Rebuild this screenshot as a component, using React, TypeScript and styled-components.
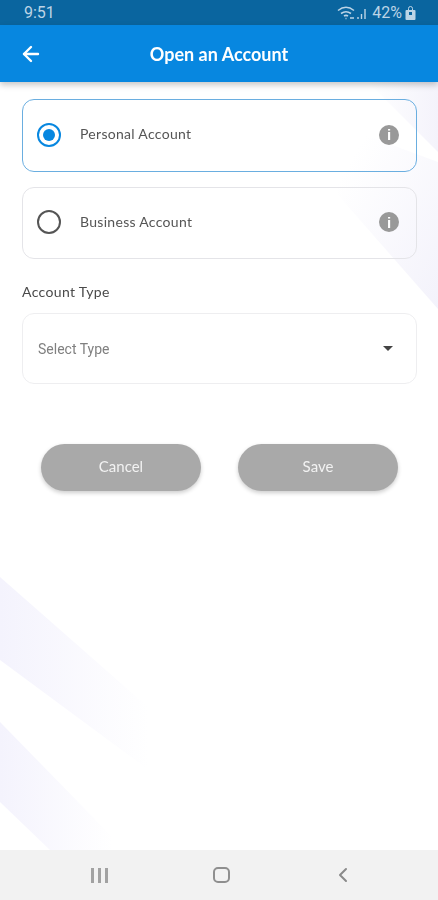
import React from 'react';
import styled, { createGlobalStyle } from 'styled-components';
import { ArrowLeft, ChevronLeft } from 'lucide-react';

const GlobalStyle = createGlobalStyle`
  html, body {
    margin: 0;
    padding: 0;
    background: #fff;
    font-family: Lato, "Liberation Sans", sans-serif;
  }
  * {
    box-sizing: border-box;
  }
`;

// the whole capture is soft, so the screen gets a slight blur
const Screen = styled.div`
  display: flex;
  flex-direction: column;
  width: 438px;
  height: 900px;
  overflow: hidden;
  filter: blur(0.45px);
`;

const StatusBar = styled.div`
  display: flex;
  align-items: center;
  justify-content: space-between;
  height: 25px;
  padding: 0 22px 0 24px;
  background: #0a659f;
  color: #bcd4e6;
  font-family: Roboto, sans-serif;
  font-size: 16px;
`;

const StatusRight = styled.div`
  display: flex;
  align-items: center;
  gap: 3px;
`;

const Header = styled.header`
  position: relative;
  z-index: 2;
  display: flex;
  align-items: center;
  justify-content: center;
  height: 57px;
  background: #0787e0;
  box-shadow: 0 3px 6px rgba(0, 0, 0, 0.22);
`;

const BackButton = styled.button`
  position: absolute;
  left: 19px;
  top: 17px;
  display: flex;
  padding: 0;
  border: 0;
  background: none;
  color: #fff;
`;

const Title = styled.h1`
  margin: 0;
  color: #fff;
  font-size: 18px;
  font-weight: 700;
`;

const Main = styled.main`
  position: relative;
  flex: 1;
  display: flex;
  flex-direction: column;
  padding: 17px 21px 0 22px;
`;

const Backdrop = styled.svg`
  position: absolute;
  left: 0;
  top: 0;
`;

const OptionCard = styled.div<{ $selected?: boolean }>`
  position: relative;
  display: flex;
  align-items: center;
  height: ${(p) => (p.$selected ? 73 : 72)}px;
  margin-bottom: ${(p) => (p.$selected ? 15 : 0)}px;
  padding: 0 15px 2px 14px;
  border: 1px solid ${(p) => (p.$selected ? '#6aaee0' : '#e4e4e8')};
  border-radius: 12px;
`;

const Radio = styled.span<{ $selected?: boolean }>`
  display: flex;
  align-items: center;
  justify-content: center;
  flex: none;
  width: 24px;
  height: 24px;
  border: 2px solid ${(p) => (p.$selected ? '#0787e0' : '#555')};
  border-radius: 50%;
  &::after {
    content: '';
    display: ${(p) => (p.$selected ? 'block' : 'none')};
    width: 12px;
    height: 12px;
    border-radius: 50%;
    background: #0787e0;
  }
`;

const OptionLabel = styled.span`
  flex: 1;
  margin-left: 19px;
  padding-bottom: 2px;
  color: #555;
  font-size: 14px;
  letter-spacing: 0.3px;
`;

const InfoIcon = styled.span`
  display: flex;
  align-items: center;
  justify-content: center;
  flex: none;
  width: 20px;
  height: 20px;
  margin-right: 2px;
  border-radius: 50%;
  background: #999;
  color: #fff;
  font-family: "Liberation Sans", sans-serif;
  font-size: 15px;
  font-weight: 700;
`;

const FieldLabel = styled.label`
  position: relative;
  margin-top: 24px;
  color: #4a4a4a;
  font-size: 14px;
  line-height: 17px;
  letter-spacing: 0.35px;
`;

const SelectBox = styled.div`
  position: relative;
  display: flex;
  align-items: center;
  justify-content: space-between;
  height: 71px;
  margin-top: 13px;
  padding: 0 23px 0 15px;
  background: #fff;
  border: 1px solid #eeeef0;
  border-radius: 12px;
  color: #808080;
  font-family: Roboto, sans-serif;
  font-size: 14px;
`;

const Caret = styled.span`
  width: 0;
  height: 0;
  border-left: 5px solid transparent;
  border-right: 5px solid transparent;
  border-top: 5px solid #444;
`;

const Actions = styled.div`
  position: relative;
  display: flex;
  justify-content: space-between;
  margin-top: 60px;
  padding: 0 19px;
`;

const ActionButton = styled.button`
  width: 160px;
  height: 47px;
  padding: 0 0 3px;
  border: 0;
  border-radius: 24px;
  background: #a9a9a9;
  box-shadow: 0 2px 4px rgba(0, 0, 0, 0.2);
  color: #f2f2f2;
  font-family: inherit;
  font-size: 15px;
`;

const NavBar = styled.nav`
  display: grid;
  grid-template-columns: repeat(3, 122px);
  align-items: center;
  justify-items: center;
  height: 50px;
  padding-left: 38px;
  background: #f2f2f2;
`;

const Bars = styled.span`
  display: flex;
  gap: 4px;
  & > i {
    display: block;
    width: 3px;
    height: 15px;
    background: #a2a2a2;
  }
`;

const HomeSquare = styled.span`
  display: block;
  width: 17px;
  height: 16px;
  border: 2px solid #8f8f8f;
  border-radius: 5px;
`;

const App: React.FC = () => (
  <>
    <GlobalStyle />
    <Screen>
      <StatusBar>
        <span>9:51</span>
        <StatusRight>
          <svg width="32" height="14" viewBox="0 0 32 14" fill="none" stroke="#bcd4e6">
            <path d="M1 4.5C6 .5 12 .5 17 4.5M4 7.5C7.5 5 10.5 5 14 7.5M7 10c1.5-1 2.5-1 4 0" strokeWidth="1.6" />
            <path d="M8.5 12.5h1M13 12h4" strokeWidth="1.5" />
            <path d="M21 13v-2M24.5 13V8M28 13V3" strokeWidth="1.4" />
          </svg>
          <span>42%</span>
          <svg width="11" height="14" viewBox="0 0 11 14">
            <rect x="0.5" y="4" width="10" height="10" rx="1" fill="#bcd4e6" />
            <path d="M3.5 4V2.5a2 2 0 0 1 4 0V4" fill="none" stroke="#bcd4e6" />
            <rect x="4" y="6" width="3" height="3" fill="#0a659f" />
          </svg>
        </StatusRight>
      </StatusBar>
      <Header>
        <BackButton aria-label="Back">
          <ArrowLeft size={24} strokeWidth={2.4} />
        </BackButton>
        <Title>Open an Account</Title>
      </Header>
      <Main>
        <Backdrop width="438" height="768" viewBox="0 0 438 768" fill="none">
          <defs>
            <linearGradient id="fade" x1="0" y1="0" x2="1" y2="0">
              <stop offset="0" stopColor="#f4f3fd" />
              <stop offset="0.9" stopColor="#ffffff" />
            </linearGradient>
            <linearGradient id="fadeRight" x1="1" y1="0" x2="0" y2="0">
              <stop offset="0" stopColor="#f4f3fb" />
              <stop offset="1" stopColor="#ffffff" />
            </linearGradient>
            <linearGradient id="fadeCorner" x1="1" y1="1" x2="0.2" y2="0.2">
              <stop offset="0" stopColor="#f3f2fb" />
              <stop offset="1" stopColor="#ffffff" />
            </linearGradient>
          </defs>
          <path d="M0 495L165 640V700L0 578Z" fill="url(#fade)" />
          <path d="M0 640L125 768H50L0 720Z" fill="url(#fade)" />
          <path d="M368 0H438V70Z" fill="url(#fadeRight)" />
          <path d="M330 40L438 80V227L338 113Z" fill="url(#fadeCorner)" />
        </Backdrop>
        <OptionCard $selected>
          <Radio $selected />
          <OptionLabel>Personal Account</OptionLabel>
          <InfoIcon>i</InfoIcon>
        </OptionCard>
        <OptionCard>
          <Radio />
          <OptionLabel>Business Account</OptionLabel>
          <InfoIcon>i</InfoIcon>
        </OptionCard>
        <FieldLabel>Account Type</FieldLabel>
        <SelectBox>
          <span>Select Type</span>
          <Caret />
        </SelectBox>
        <Actions>
          <ActionButton>Cancel</ActionButton>
          <ActionButton>Save</ActionButton>
        </Actions>
      </Main>
      <NavBar>
        <Bars>
          <i />
          <i />
          <i />
        </Bars>
        <HomeSquare />
        <ChevronLeft size={24} strokeWidth={2} color="#8a8a8a" />
      </NavBar>
    </Screen>
  </>
);

export default App;
